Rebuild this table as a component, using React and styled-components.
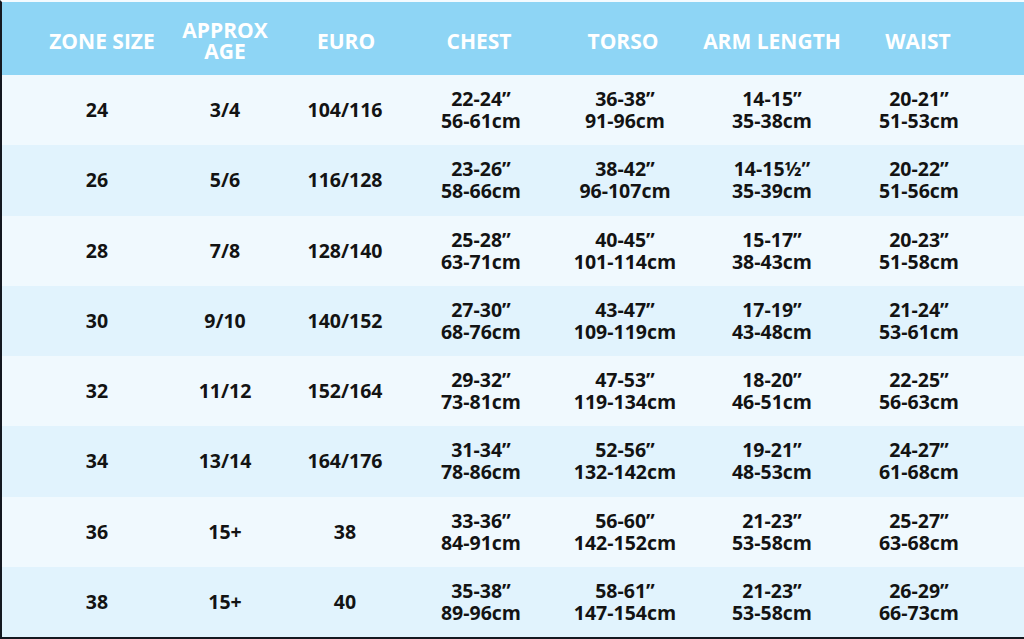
import React from "react";
import styled, { createGlobalStyle } from "styled-components";

const Global = createGlobalStyle`
  html, body { margin: 0; padding: 0; background: #ffffff; }
  body { font-family: "Open Sans", "Noto Sans", sans-serif; }
`;

const COLS = "130px 126px 114px 158px 130px 164px 130px";

const Frame = styled.div`
  box-sizing: border-box;
  width: 1024px;
  height: 639px;
  border-top: 2px solid #f4fbff;
  border-left: 2px solid #141820;
  border-bottom: 2px solid #141820;
  display: grid;
  grid-template-rows: 73px repeat(8, 1fr);
  overflow: hidden;
`;

const HeaderRow = styled.div`
  display: grid;
  grid-template-columns: ${COLS};
  padding-left: 30px;
  padding-top: 5px;
  background: #8ed5f5;
  align-items: center;
`;

const HeadCell = styled.div`
  color: #ffffff;
  font-weight: 700;
  font-size: 21px;
  line-height: 21px;
  text-align: center;
  text-transform: uppercase;
  transform: translateX(${(p) => p.$shift || 0}px);
  white-space: pre-line;
`;

const Row = styled.div`
  display: grid;
  grid-template-columns: ${COLS};
  padding-left: 30px;
  align-items: center;
  background: ${(p) => (p.$alt ? "#e1f3fd" : "#f0f9fe")};
`;

const Cell = styled.div`
  color: #131313;
  font-weight: 700;
  font-size: 19.5px;
  line-height: 22px;
  text-align: center;
  white-space: pre-line;
`;

const headers = [
  ["ZONE SIZE", 5],
  ["APPROX\nAGE", 0],
  ["EURO", 1],
  ["CHEST", -2],
  ["TORSO", -2],
  ["ARM LENGTH", 0],
  ["WAIST", -1],
];

const rows = [
  ["24", "3/4", "104/116", "22-24”\n56-61cm", "36-38”\n91-96cm", "14-15”\n35-38cm", "20-21”\n51-53cm"],
  ["26", "5/6", "116/128", "23-26”\n58-66cm", "38-42”\n96-107cm", "14-15½”\n35-39cm", "20-22”\n51-56cm"],
  ["28", "7/8", "128/140", "25-28”\n63-71cm", "40-45”\n101-114cm", "15-17”\n38-43cm", "20-23”\n51-58cm"],
  ["30", "9/10", "140/152", "27-30”\n68-76cm", "43-47”\n109-119cm", "17-19”\n43-48cm", "21-24”\n53-61cm"],
  ["32", "11/12", "152/164", "29-32”\n73-81cm", "47-53”\n119-134cm", "18-20”\n46-51cm", "22-25”\n56-63cm"],
  ["34", "13/14", "164/176", "31-34”\n78-86cm", "52-56”\n132-142cm", "19-21”\n48-53cm", "24-27”\n61-68cm"],
  ["36", "15+", "38", "33-36”\n84-91cm", "56-60”\n142-152cm", "21-23”\n53-58cm", "25-27”\n63-68cm"],
  ["38", "15+", "40", "35-38”\n89-96cm", "58-61”\n147-154cm", "21-23”\n53-58cm", "26-29”\n66-73cm"],
];

export default function App() {
  return (
    <>
      <Global />
      <Frame>
        <HeaderRow>
          {headers.map(([t, s]) => (
            <HeadCell key={t} $shift={s}>
              {t}
            </HeadCell>
          ))}
        </HeaderRow>
        {rows.map((r, i) => (
          <Row key={i} $alt={i % 2 === 1}>
            {r.map((c, j) => (
              <Cell key={j}>{c}</Cell>
            ))}
          </Row>
        ))}
      </Frame>
    </>
  );
}
